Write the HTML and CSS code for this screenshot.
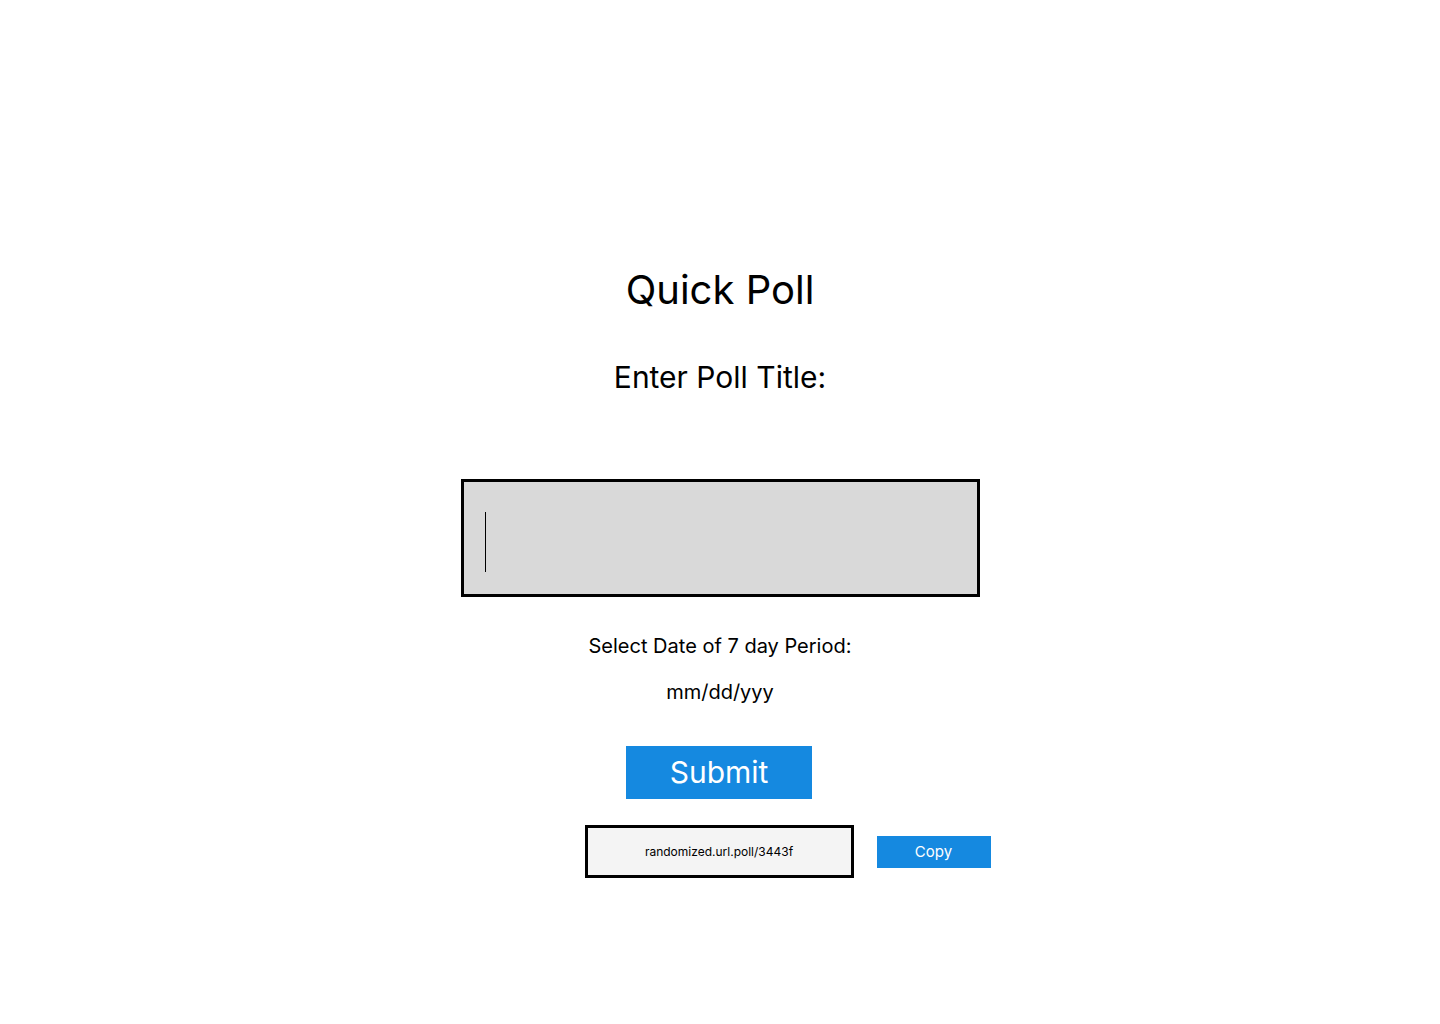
FILE: index.html
```html
<!DOCTYPE html>
<html lang="en">
<head>
<meta charset="utf-8">
<title>Quick Poll</title>
<link rel="stylesheet" href="styles.css">
</head>
<body>
<main class="page">
  <h1 class="title">Quick Poll</h1>
  <h2 class="subtitle">Enter Poll Title:</h2>
  <div class="title-input"><span class="caret"></span></div>
  <p class="label">Select Date of 7 day Period:</p>
  <p class="date">mm/dd/yyy</p>
  <button class="submit" type="button">Submit</button>
  <div class="url-row">
    <div class="url-box">randomized.url.poll/3443f</div>
    <button class="copy" type="button">Copy</button>
  </div>
</main>
</body>
</html>
```

FILE: styles.css
```css
html, body {
  margin: 0;
  padding: 0;
  background: #ffffff;
}

body {
  font-family: Inter, "Noto Sans", sans-serif;
  color: #000000;
}

.page {
  display: flex;
  flex-direction: column;
  align-items: center;
  padding-top: 270px;
}

.title {
  margin: 0;
  font-size: 40px;
  font-weight: 400;
  line-height: 40px;
}

.subtitle {
  margin: 52px 0 0;
  font-size: 30px;
  font-weight: 400;
  line-height: 30px;
}

.title-input {
  margin: 87px 0 0 1px;
  border: 3px solid #000000;
  background: #d9d9d9;
  display: flex;
  align-items: flex-start;
  padding: 30px 0 0 21px;
  box-sizing: content-box;
  width: 492px;
  height: 82px;
}

.caret {
  display: block;
  width: 1px;
  height: 60px;
  background: #000000;
}

.label {
  margin: 39px 0 0;
  font-size: 20px;
  line-height: 20px;
}

.date {
  margin: 26px 0 0;
  font-size: 20px;
  line-height: 20px;
}

.submit {
  margin: 44px 2px 0 0;
  width: 186px;
  height: 53px;
  border: 0;
  padding: 0;
  background: #1589e0;
  color: #ffffff;
  font-family: Inter, "Noto Sans", sans-serif;
  font-size: 30px;
  line-height: 53px;
}

.url-row {
  margin-top: 26px;
  width: 100%;
  box-sizing: border-box;
  padding-right: 2px;
  display: grid;
  grid-template-columns: 1fr auto 1fr;
  align-items: center;
}

.url-box {
  grid-column: 2;
  width: 263px;
  height: 47px;
  border: 3px solid #000000;
  background: #f4f4f4;
  display: flex;
  align-items: center;
  justify-content: center;
  font-size: 12px;
}

.copy {
  grid-column: 3;
  justify-self: start;
  margin-left: 23px;
  width: 114px;
  height: 32px;
  border: 0;
  padding: 0;
  background: #1589e0;
  color: #ffffff;
  font-family: Inter, "Noto Sans", sans-serif;
  font-size: 15px;
}
```
